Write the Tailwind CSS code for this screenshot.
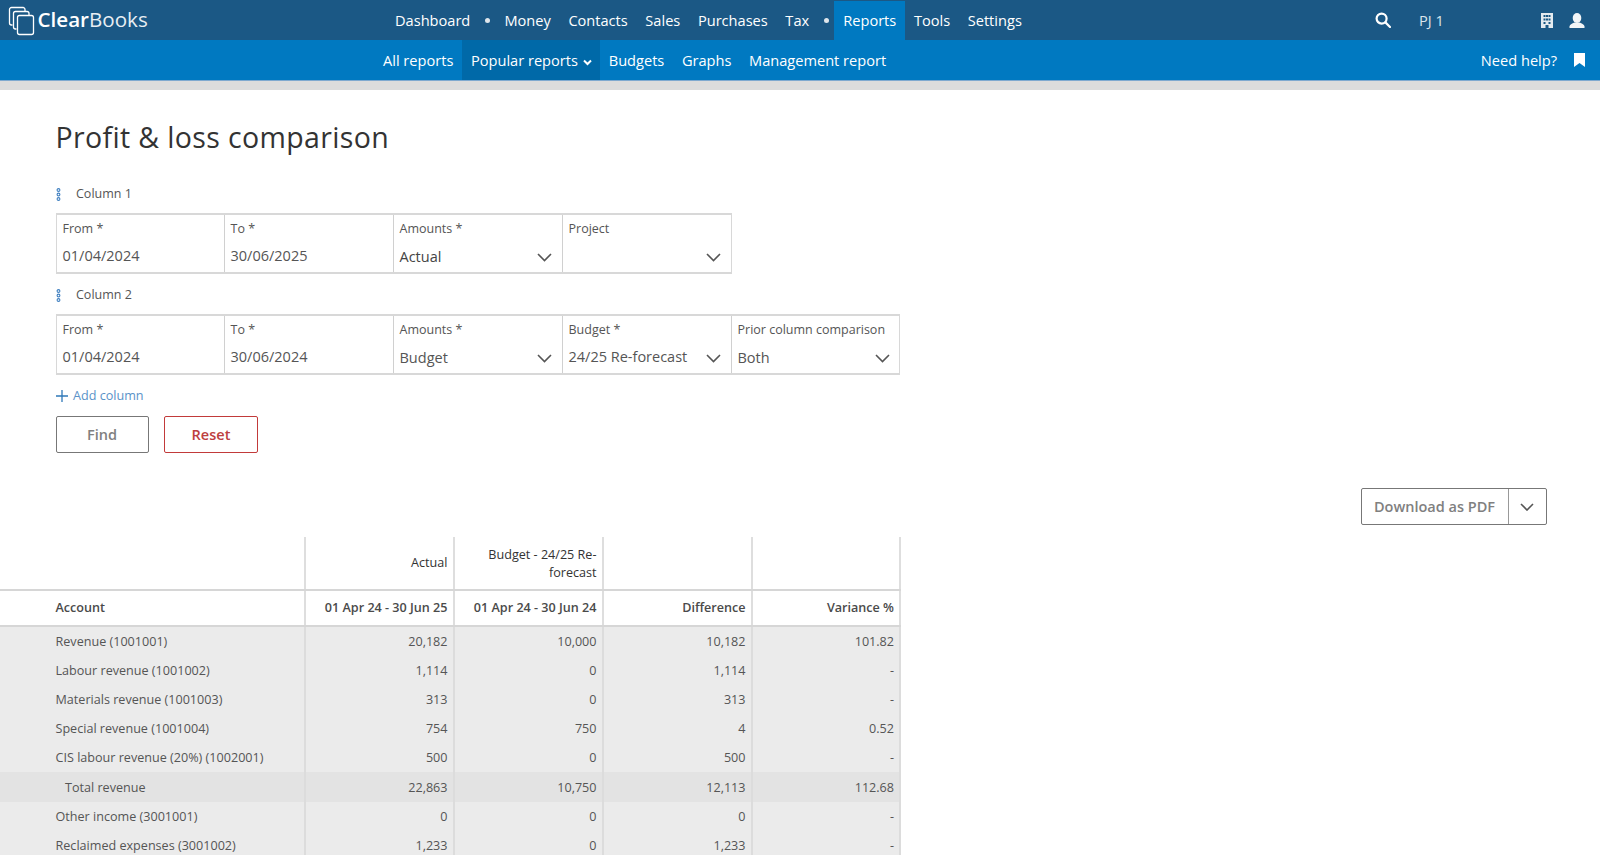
<!DOCTYPE html>
<html lang="en">
<head>
  <title>Profit &amp; loss comparison</title>
  <meta charset="utf-8">
  <script src="https://cdn.jsdelivr.net/npm/@tailwindcss/browser@4"></script>
</head>

<body class="w-[1600px] h-[855px] overflow-hidden bg-white font-['Open_Sans',sans-serif] text-[#555]">
  <!-- main nav -->
  <div class="flex h-10 bg-[#1b5885] text-[14.6px] text-white">
    <div class="w-[386.2px] flex items-center pl-2">
      <svg class="w-[28px] h-[30px] mt-[1px]" viewBox="0 0 28 30" fill="none" stroke="#fff" stroke-width="1.3">
        <path d="M17 5V3.500A2 2 0 0 0 15 1.500H3.500A2 2 0 0 0 1.500 3.500V17A2 2 0 0 0 3.500 19H4.500"/>
        <path d="M21 9.500V7.500A2 2 0 0 0 19 5.500H7.500A2 2 0 0 0 5.500 7.500V21A2 2 0 0 0 7.500 23H8.500"/>
        <rect x="9.500" y="9.500" width="16" height="19" rx="2"/>
      </svg>
      <span class="ml-[1.500px] mb-[2px] text-[20.6px] leading-none"><span class="font-semibold">Clear</span><span class="text-[#e8eef3]">Books</span></span>
    </div>
    <nav class="flex items-center h-10">
      <a class="px-[8.8px] pt-[2px]">Dashboard</a>
      <span class="w-[16.500px] flex justify-center"><span class="w-[5px] h-[5px] rounded-full bg-[#dfe6ec]"></span></span>
      <a class="px-[8.8px] pt-[2px]">Money</a>
      <a class="px-[8.8px] pt-[2px]">Contacts</a>
      <a class="px-[8.8px] pt-[2px]">Sales</a>
      <a class="px-[8.8px] pt-[2px]">Purchases</a>
      <a class="px-[8.8px] pt-[2px]">Tax</a>
      <span class="w-[16.5px] flex justify-center"><span class="w-[5px] h-[5px] rounded-full bg-[#dfe6ec]"></span></span>
      <a class="px-[8.8px] pt-[1px] h-[39px] mt-[1px] flex items-center bg-[#0079c1]">Reports</a>
      <a class="px-[8.8px] pt-[2px]">Tools</a>
      <a class="px-[8.8px] pt-[2px]">Settings</a>
    </nav>
    <div class="ml-auto flex items-center">
      <svg class="w-[16px] h-[16px]" viewBox="0 0 16 16" fill="none" stroke="#fff" stroke-width="2.200"><circle cx="6.600" cy="6.600" r="5"/><path d="M10.400 10.400L15 15" stroke-linecap="round"/></svg>
      <span class="ml-[28px] w-[122px] pt-[2px] text-[#dbe5ec]">PJ 1</span>
      <svg class="w-[12px] h-[15px]" viewBox="0 0 12 15" fill="#e4ebf0"><path fill-rule="evenodd" d="M0 0H12V15H7.500V12H4.500V15H0ZM2.500 2V4H4.500V2ZM5 2V4H7V2ZM7.500 2V4H9.500V2ZM2.500 5.500V7.500H4.500V5.500ZM5 5.500V7.500H7V5.500ZM7.500 5.500V7.500H9.500V5.500ZM2.500 9V11H4.500V9ZM7.500 9V11H9.500V9Z"/></svg>
      <svg class="ml-[16px] mr-[15px] w-[16px] h-[15px]" viewBox="0 0 16 15" fill="#f2f5f7"><ellipse cx="8" cy="5" rx="4.300" ry="5"/><path d="M0.500 15V13.500C0.500 11.500 3 10.500 5.500 9.500H10.500C13 10.500 15.500 11.500 15.500 13.500V15Z"/></svg>
    </div>
  </div>

  <!-- sub nav -->
  <div class="flex h-10 bg-[#0079c1] text-[14.6px] text-white">
    <div class="w-[374.2px]"></div>
    <nav class="flex items-center">
      <a class="px-[8.8px] pt-[2px]">All reports</a>
      <a class="pl-[8.8px] pr-[8px] pt-[2px] h-10 flex items-center bg-[#0069a8]">Popular reports
        <svg class="ml-[5px] mt-[3px] w-[9px] h-[7px]" viewBox="0 0 9 7" fill="none" stroke="#fff" stroke-width="2"><path d="M1 1.500L4.500 5L8 1.500"/></svg>
      </a>
      <a class="px-[8.8px] pt-[2px]">Budgets</a>
      <a class="px-[8.8px] pt-[2px]">Graphs</a>
      <a class="px-[8.8px] pt-[2px]">Management report</a>
    </nav>
    <div class="ml-auto flex items-center">
      <span class="pt-[2px]">Need help?</span>
      <svg class="ml-[17px] mr-[15px] w-[11px] h-[14px]" viewBox="0 0 11 14" fill="#fff"><path d="M0 0H11V14L5.500 10L0 14Z"/></svg>
    </div>
  </div>
  <div class="h-[10px] border-t border-[#7fa9cf] bg-[#dcdcdc]"></div>

  <main class="px-[55.5px]">
    <h1 class="mt-[26px] h-[42px] text-[28.5px] leading-[42px] tracking-[0.36px] text-[#333]">Profit &amp; loss comparison</h1>

    <!-- column 1 -->
    <div class="mt-[26px] flex h-[20px] items-center text-[12.5px]">
      <svg class="w-[5px] h-[13px]" viewBox="0 0 5 13" fill="none" stroke="#3f7fc0" stroke-width="1.100"><circle cx="2.500" cy="2" r="1.400"/><circle cx="2.500" cy="6.500" r="1.400"/><circle cx="2.500" cy="11" r="1.400"/></svg>
      <span class="ml-[15.5px]">Column 1</span>
    </div>
    <div class="mt-[9px] flex w-fit border border-[#d8d8d8] border-b-2 border-t-2 h-[61px]">
      <div class="w-[168px] pl-[6px] border-r border-[#d0d0d0]">
        <div class="mt-[4px] text-[12.5px] leading-[20px]">From *</div>
        <div class="mt-[7px] text-[14.5px] leading-[20px]">01/04/2024</div>
      </div>
      <div class="w-[169px] pl-[6px] border-r border-[#d0d0d0]">
        <div class="mt-[4px] text-[12.5px] leading-[20px]">To *</div>
        <div class="mt-[7px] text-[14.5px] leading-[20px]">30/06/2025</div>
      </div>
      <div class="w-[169px] pl-[6px] pr-[10px] border-r border-[#d0d0d0]">
        <div class="mt-[4px] text-[12.5px] leading-[20px]">Amounts *</div>
        <div class="mt-[8px] flex items-center justify-between text-[14.5px] leading-[20px] text-[#444]">Actual
          <svg class="w-[15px] h-[9px]" viewBox="0 0 15 9" fill="none" stroke="#555" stroke-width="1.600"><path d="M1 1L7.500 7.500L14 1"/></svg>
        </div>
      </div>
      <div class="w-[168.5px] pl-[6px] pr-[10px]">
        <div class="mt-[4px] text-[12.5px] leading-[20px]">Project</div>
        <div class="mt-[8px] flex h-[20px] items-center justify-end">
          <svg class="w-[15px] h-[9px]" viewBox="0 0 15 9" fill="none" stroke="#555" stroke-width="1.600"><path d="M1 1L7.500 7.500L14 1"/></svg>
        </div>
      </div>
    </div>

    <!-- column 2 -->
    <div class="mt-[11px] flex h-[20px] items-center text-[12.5px]">
      <svg class="w-[5px] h-[13px]" viewBox="0 0 5 13" fill="none" stroke="#3f7fc0" stroke-width="1.100"><circle cx="2.500" cy="2" r="1.400"/><circle cx="2.500" cy="6.500" r="1.400"/><circle cx="2.500" cy="11" r="1.400"/></svg>
      <span class="ml-[15.5px]">Column 2</span>
    </div>
    <div class="mt-[9px] flex w-fit border border-[#d8d8d8] border-b-2 border-t-2 h-[61px]">
      <div class="w-[168px] pl-[6px] border-r border-[#d0d0d0]">
        <div class="mt-[4px] text-[12.5px] leading-[20px]">From *</div>
        <div class="mt-[7px] text-[14.5px] leading-[20px]">01/04/2024</div>
      </div>
      <div class="w-[169px] pl-[6px] border-r border-[#d0d0d0]">
        <div class="mt-[4px] text-[12.5px] leading-[20px]">To *</div>
        <div class="mt-[7px] text-[14.5px] leading-[20px]">30/06/2024</div>
      </div>
      <div class="w-[169px] pl-[6px] pr-[10px] border-r border-[#d0d0d0]">
        <div class="mt-[4px] text-[12.5px] leading-[20px]">Amounts *</div>
        <div class="mt-[8px] flex items-center justify-between text-[14.5px] leading-[20px]">Budget
          <svg class="w-[15px] h-[9px]" viewBox="0 0 15 9" fill="none" stroke="#555" stroke-width="1.600"><path d="M1 1L7.500 7.500L14 1"/></svg>
        </div>
      </div>
      <div class="w-[169px] pl-[6px] pr-[10px] border-r border-[#d0d0d0]">
        <div class="mt-[4px] text-[12.5px] leading-[20px]">Budget *</div>
        <div class="mt-[7px] flex items-center justify-between text-[14.5px] leading-[20px]">24/25 Re-forecast
          <svg class="w-[15px] h-[9px] mt-[2px]" viewBox="0 0 15 9" fill="none" stroke="#555" stroke-width="1.600"><path d="M1 1L7.500 7.500L14 1"/></svg>
        </div>
      </div>
      <div class="w-[167.5px] pl-[6px] pr-[9px]">
        <div class="mt-[4px] text-[12.5px] leading-[20px] whitespace-nowrap">Prior column comparison</div>
        <div class="mt-[8px] flex items-center justify-between text-[14.5px] leading-[20px]">Both
          <svg class="w-[15px] h-[9px]" viewBox="0 0 15 9" fill="none" stroke="#555" stroke-width="1.600"><path d="M1 1L7.500 7.500L14 1"/></svg>
        </div>
      </div>
    </div>

    <div class="mt-[11px] flex h-[20px] items-center text-[12.6px] text-[#5a92c8]">
      <svg class="w-[12px] h-[12px]" viewBox="0 0 13 13" fill="none" stroke="#2f78b8" stroke-width="1.400"><path d="M6.500 0V13M0 6.500H13"/></svg>
      <span class="ml-[5.5px]">Add column</span>
    </div>

    <div class="mt-[10px] flex gap-[15.5px]">
      <button class="w-[93px] h-[37px] rounded-[2px] border border-[#777] text-[14.5px] font-semibold text-[#808080]">Find</button>
      <button class="w-[94px] h-[37px] rounded-[2px] border border-[#c23a3a] text-[14.5px] font-semibold text-[#bd4040]">Reset</button>
    </div>

    <div class="mt-[35px] flex justify-end">
      <div class="flex h-[37px] w-[186px] mr-[-2px] rounded-[2px] border border-[#777] text-[14.5px] font-semibold text-[#808080]">
        <span class="w-[147px] flex items-center justify-center border-r border-[#999]">Download as PDF</span>
        <span class="flex-1 flex items-center justify-center">
          <svg class="w-[14px] h-[8px]" viewBox="0 0 14 8" fill="none" stroke="#555" stroke-width="1.600"><path d="M1 1L7 7L13 1"/></svg>
        </span>
      </div>
    </div>
  </main>

  <!-- table -->
  <section class="mt-[12px] w-[901px] text-[12.6px]">
    <div class="grid grid-cols-[305.5px_149px_149px_149px_148.5px] h-[53.5px] border-b-2 border-[#d6d6d6] text-[#333]">
      <div class="border-r-2 border-[#dedede]"></div>
      <div class="flex items-center justify-end pt-[2px] pr-[5px] border-r-2 border-[#dedede]">Actual</div>
      <div class="flex items-center justify-end text-right pt-[2px] pr-[5px] leading-[17.5px] border-r-2 border-[#dedede]">Budget - 24/25 Re-<br>forecast</div>
      <div class="border-r-2 border-[#dedede]"></div>
      <div class="border-r-2 border-[#dedede]"></div>
    </div>
    <div class="grid grid-cols-[305.5px_149px_149px_149px_148.5px] h-[36px] border-b-2 border-[#d6d6d6] font-semibold text-[#4a4a4a] [&>div]:flex [&>div]:items-center [&>div]:justify-end [&>div]:pt-[2px] [&>div]:pr-[5px] [&>div]:border-r-2 [&>div]:border-[#dedede]">
      <div class="!justify-start pl-[55.5px]">Account</div>
      <div>01 Apr 24 - 30 Jun 25</div>
      <div>01 Apr 24 - 30 Jun 24</div>
      <div>Difference</div>
      <div>Variance %</div>
    </div>
    <div class="grid grid-cols-[305.5px_149px_149px_149px_148.5px] auto-rows-[29.2px] bg-[#ebebeb] [&>div]:flex [&>div]:items-center [&>div]:justify-end [&>div]:pt-[2px] [&>div]:pr-[5px] [&>div]:border-r-2 [&>div]:border-[#dcdcdc]">
      <div class="!justify-start pl-[55.5px]">Revenue (1001001)</div><div>20,182</div><div>10,000</div><div>10,182</div><div>101.82</div>
      <div class="!justify-start pl-[55.5px]">Labour revenue (1001002)</div><div>1,114</div><div>0</div><div>1,114</div><div>-</div>
      <div class="!justify-start pl-[55.5px]">Materials revenue (1001003)</div><div>313</div><div>0</div><div>313</div><div>-</div>
      <div class="!justify-start pl-[55.5px]">Special revenue (1001004)</div><div>754</div><div>750</div><div>4</div><div>0.52</div>
      <div class="!justify-start pl-[55.5px]">CIS labour revenue (20%) (1002001)</div><div>500</div><div>0</div><div>500</div><div>-</div>
      <div class="!justify-start pl-[65px] bg-[#e3e3e3]">Total revenue</div><div class="bg-[#e3e3e3]">22,863</div><div class="bg-[#e3e3e3]">10,750</div><div class="bg-[#e3e3e3]">12,113</div><div class="bg-[#e3e3e3]">112.68</div>
      <div class="!justify-start pl-[55.5px]">Other income (3001001)</div><div>0</div><div>0</div><div>0</div><div>-</div>
      <div class="!justify-start pl-[55.5px]">Reclaimed expenses (3001002)</div><div>1,233</div><div>0</div><div>1,233</div><div>-</div>
    </div>
  </section>
</body>
</html>
